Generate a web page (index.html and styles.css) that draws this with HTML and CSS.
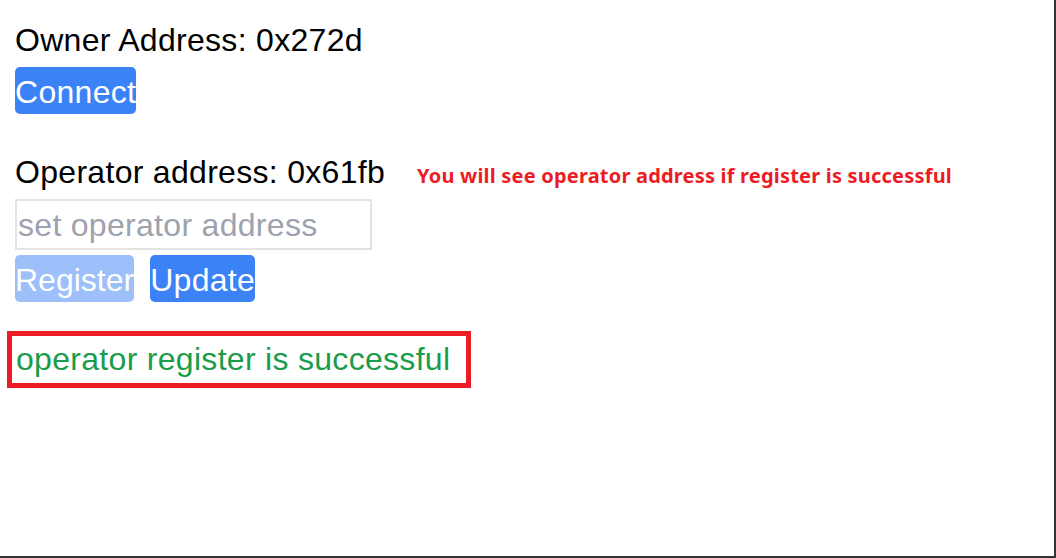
FILE: index.html
```html
<!DOCTYPE html>
<html lang="en">
<head>
<meta charset="utf-8">
<title>Operator</title>
<link rel="stylesheet" href="styles.css">
</head>
<body>
<div class="frame">
  <div class="page">
    <div class="line owner">Owner Address: 0x272d</div>
    <button class="btn connect">Connect</button>
    <div class="operator-row">
      <span class="line">Operator address: 0x61fb</span>
      <span class="hint">You will see operator address if register is successful</span>
    </div>
    <input class="addr-input" type="text" placeholder="set operator address">
    <div class="actions">
      <button class="btn disabled">Register</button>
      <button class="btn">Update</button>
    </div>
    <div class="highlight">
      <span class="success">operator register is successful</span>
    </div>
  </div>
</div>
</body>
</html>
```

FILE: styles.css
```css
html, body {
  margin: 0;
  padding: 0;
  background: #ffffff;
}

.frame {
  width: 1056px;
  height: 558px;
  box-sizing: border-box;
  border-right: 2px solid #333333;
  border-bottom: 2px solid #333333;
  overflow: hidden;
}

.page {
  padding: 21px 0 0 15px;
  display: flex;
  flex-direction: column;
  align-items: flex-start;
  font-family: "Liberation Sans", Arial, sans-serif;
  font-size: 32px;
  letter-spacing: 0.3px;
  color: #000000;
}

.line {
  line-height: 38px;
}

.btn {
  font-family: inherit;
  font-size: 32px;
  letter-spacing: 0.3px;
  color: #ffffff;
  background: #3b82f6;
  border: none;
  border-radius: 5px;
  padding: 4px 0 0 0;
  height: 47px;
  box-sizing: border-box;
  line-height: 43px;
  cursor: pointer;
}

.btn.disabled {
  background: #9dc0fa;
  letter-spacing: 0;
}

.connect {
  margin-top: 8px;
}

.operator-row {
  margin-top: 39px;
  display: flex;
  align-items: baseline;
  gap: 32px;
}

.hint {
  font-family: "Noto Sans", "Liberation Sans", sans-serif;
  font-weight: bold;
  font-size: 20px;
  letter-spacing: 0.2px;
  color: #ed1c24;
}

.addr-input {
  margin-top: 8px;
  width: 357px;
  height: 51px;
  box-sizing: border-box;
  border: 2px solid #e3e3e3;
  padding: 1px 0 0 1px;
  font-family: inherit;
  font-size: 32px;
  letter-spacing: 0.3px;
  outline: none;
}

.addr-input::placeholder {
  color: #9ca3af;
}

.actions {
  margin-top: 5px;
  display: flex;
  gap: 16px;
}

.highlight {
  margin-top: 29px;
  margin-left: -8px;
  width: 464px;
  height: 57px;
  box-sizing: border-box;
  border: 5px solid #ed1c24;
  padding-left: 4px;
}

.success {
  line-height: 47px;
  color: #1a9c4b;
}
```
